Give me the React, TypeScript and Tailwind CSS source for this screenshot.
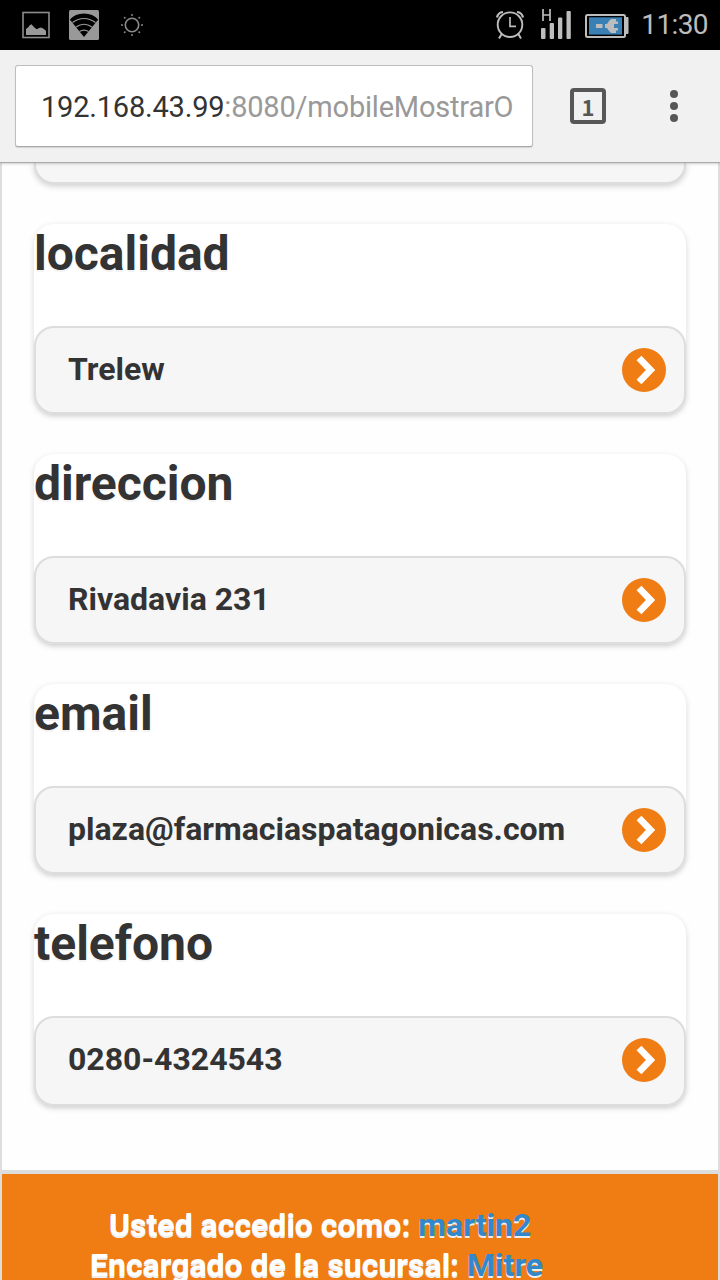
import React from 'react';

const fields = [
  { label: 'localidad', value: 'Trelew' },
  { label: 'direccion', value: 'Rivadavia 231' },
  { label: 'email', value: 'plaza@farmaciaspatagonicas.com' },
  { label: 'telefono', value: '0280-4324543' },
];

function StatusBar() {
  return (
    <header className="flex h-[50px] shrink-0 items-center justify-between bg-black">
      <div className="flex h-[50px]">
        <svg width="160" height="50" viewBox="0 0 160 50" fill="none">
          <rect x="23" y="12.5" width="26" height="25" stroke="#8c8c8c" strokeWidth="1.600" />
          <path d="M26 35V29L28 27.500L30 25L31.500 24.300L33 26L35 28L37 29.300L39 28L41 27.500L44 29L46 31V35Z" fill="#999" />
          <rect x="69" y="10" width="30" height="30" rx="1.500" fill="#999" />
          <path d="M84 37L69.800 19.500Q75 13.500 84 13.500T98.200 19.500Z" fill="#000" />
          <path d="M72.500 22.500Q84 14.500 95.500 22.500M76 27Q84 21.500 92 27M79.500 31.500Q84 28.700 88.500 31.500" stroke="#999" strokeWidth="1.200" />
          <circle cx="132" cy="25" r="6.700" stroke="#8c8c8c" strokeWidth="1.600" />
          <g fill="#858585">
            <circle cx="132" cy="15" r="1" /><circle cx="132" cy="35" r="1" />
            <circle cx="122" cy="25" r="1" /><circle cx="142" cy="25" r="1" />
            <circle cx="124.700" cy="17.700" r="1" /><circle cx="139.300" cy="17.700" r="1" />
            <circle cx="124.700" cy="32.300" r="1" /><circle cx="139.300" cy="32.300" r="1" />
          </g>
        </svg>
      </div>
      <div className="flex items-center pr-[12px]">
        <svg width="150" height="50" viewBox="486 0 150 50" fill="none">
          <g stroke="#bdbdbd">
            <circle cx="510" cy="24.700" r="12.300" strokeWidth="1.900" />
            <path d="M510 17V26.300H516" strokeWidth="1.700" />
            <path d="M497 17.500Q498 12.500 503 12M517 12Q522 12.500 523 17.500" strokeWidth="2.200" />
            <path d="M502 33.500L499 38.500M518 33.500L521 38.500" strokeWidth="2" />
            <path d="M543 9V21M550 9V21M543 15H550" strokeWidth="1.700" />
          </g>
          <g fill="#bdbdbd">
            <rect x="541" y="28" width="4.500" height="11" rx="1" />
            <rect x="549.700" y="23" width="4.300" height="16" rx="1" />
            <rect x="558" y="17.500" width="4.300" height="21.500" rx="1" />
            <rect x="566.500" y="11" width="4.300" height="28" rx="1" />
            <rect x="624" y="17" width="4.500" height="17" rx="1" />
          </g>
          <rect x="586" y="15" width="39" height="22" rx="1.500" fill="#000" stroke="#bdbdbd" strokeWidth="2" />
          <rect x="589" y="17.300" width="33" height="17.300" fill="#3a80b5" />
          <path d="M596 24H602.500V28H596ZM605 24H607L609 21L611 19H616V21.500H618V24H614V28H618V30.500H616V33H611L609 31L607 28H605Z" fill="#bdbdbd" />
        </svg>
        <span className="ml-[5px] text-[28px] leading-[52px] tracking-[-0.6px] text-[#bdbdbd]">11:30</span>
      </div>
    </header>
  );
}

function Toolbar() {
  return (
    <div className="relative z-10 flex h-[112px] shrink-0 items-start bg-[#f1f1f1] pl-[15px] pt-[15px] shadow-[0_1px_1px_#aaa,0_2px_3px_rgba(0,0,0,0.15)]">
      <div className="h-[82px] w-[518px] whitespace-nowrap rounded-[3px] border border-[#bdbdbd] border-b-[#a8a8a8] bg-white pl-[25px] text-[29px] leading-[83px] tracking-[-0.2px] text-[#999] shadow-[0_1px_1px_rgba(0,0,0,0.12)]">
        <span className="text-[#333]">192.168.43.99</span>:8080/mobileMostrarO
      </div>
      <div className="ml-[37px] mt-[23px] flex size-[36px] items-center justify-center rounded-[4px] border-4 border-[#575757] font-['Noto_Sans_CJK_SC',sans-serif] text-[22px] font-bold leading-none text-[#575757]">
        <span className="-mt-px">1</span>
      </div>
      <div className="ml-[64px] mt-[25px] flex flex-col gap-[4px]">
        <i className="size-[8px] rounded-full bg-[#575757]" />
        <i className="size-[8px] rounded-full bg-[#575757]" />
        <i className="size-[8px] rounded-full bg-[#575757]" />
      </div>
    </div>
  );
}

function FieldCard({ label, value }: { label: string; value: string }) {
  return (
    <section className="group rounded-[20px] bg-white text-[#333] shadow-[0_2px_6px_rgba(0,0,0,0.15)]">
      <h1 className="h-[102px] text-[48px] font-bold leading-[60px] [text-shadow:0_2px_0_#f3f3f3]">{label}</h1>
      <button className="flex h-[88px] w-full items-center justify-between rounded-[20px] border-2 border-[#ddd] bg-[#f6f6f6] pl-[32px] pr-[18px] text-[32px] font-bold leading-[40px] shadow-[0_2px_4px_rgba(0,0,0,0.06)] [text-shadow:0_2px_0_#f3f3f3] group-last:h-[90px]">
        <span className="-mt-[2px] group-last:-mt-[4px]">{value}</span>
        <svg width="44" height="44" viewBox="0 0 44 44" fill="none" className="group-last:-mt-[2px]">
          <circle cx="22" cy="22" r="22" fill="#f07c14" />
          <path d="M17 10L28.500 22L17 34" stroke="#fff" strokeWidth="6.800" />
        </svg>
      </button>
    </section>
  );
}

export default function App() {
  return (
    <div className="flex h-[1280px] w-[720px] flex-col overflow-hidden bg-[#ddd] font-['Roboto',sans-serif]">
      <StatusBar />
      <Toolbar />
      <main className="mx-[2px] h-[1008px] shrink-0 overflow-hidden bg-[#fefefe] px-[32px]">
        <div className="h-[22px] rounded-b-[20px] border-2 border-t-0 border-[#ddd] bg-[#f6f6f6] shadow-[0_2px_6px_rgba(0,0,0,0.2)]" />
        <div className="mt-[40px] flex flex-col gap-[40px]">
          {fields.map((field) => (
            <FieldCard key={field.label} {...field} />
          ))}
        </div>
      </main>
      <footer className="mx-[2px] mt-[4px] h-[106px] shrink-0 overflow-hidden bg-[#f07c14] pt-[31px] text-[32px] font-bold leading-[40px] text-white [text-shadow:0_2px_0_#eee]">
        <p className="whitespace-nowrap pl-[107px]">Usted accedio como: <a className="text-[#3388cc]">martin2</a></p>
        <p className="whitespace-nowrap pl-[88px]">Encargado de la sucursal: <a className="text-[#3388cc]">Mitre</a></p>
      </footer>
    </div>
  );
}
